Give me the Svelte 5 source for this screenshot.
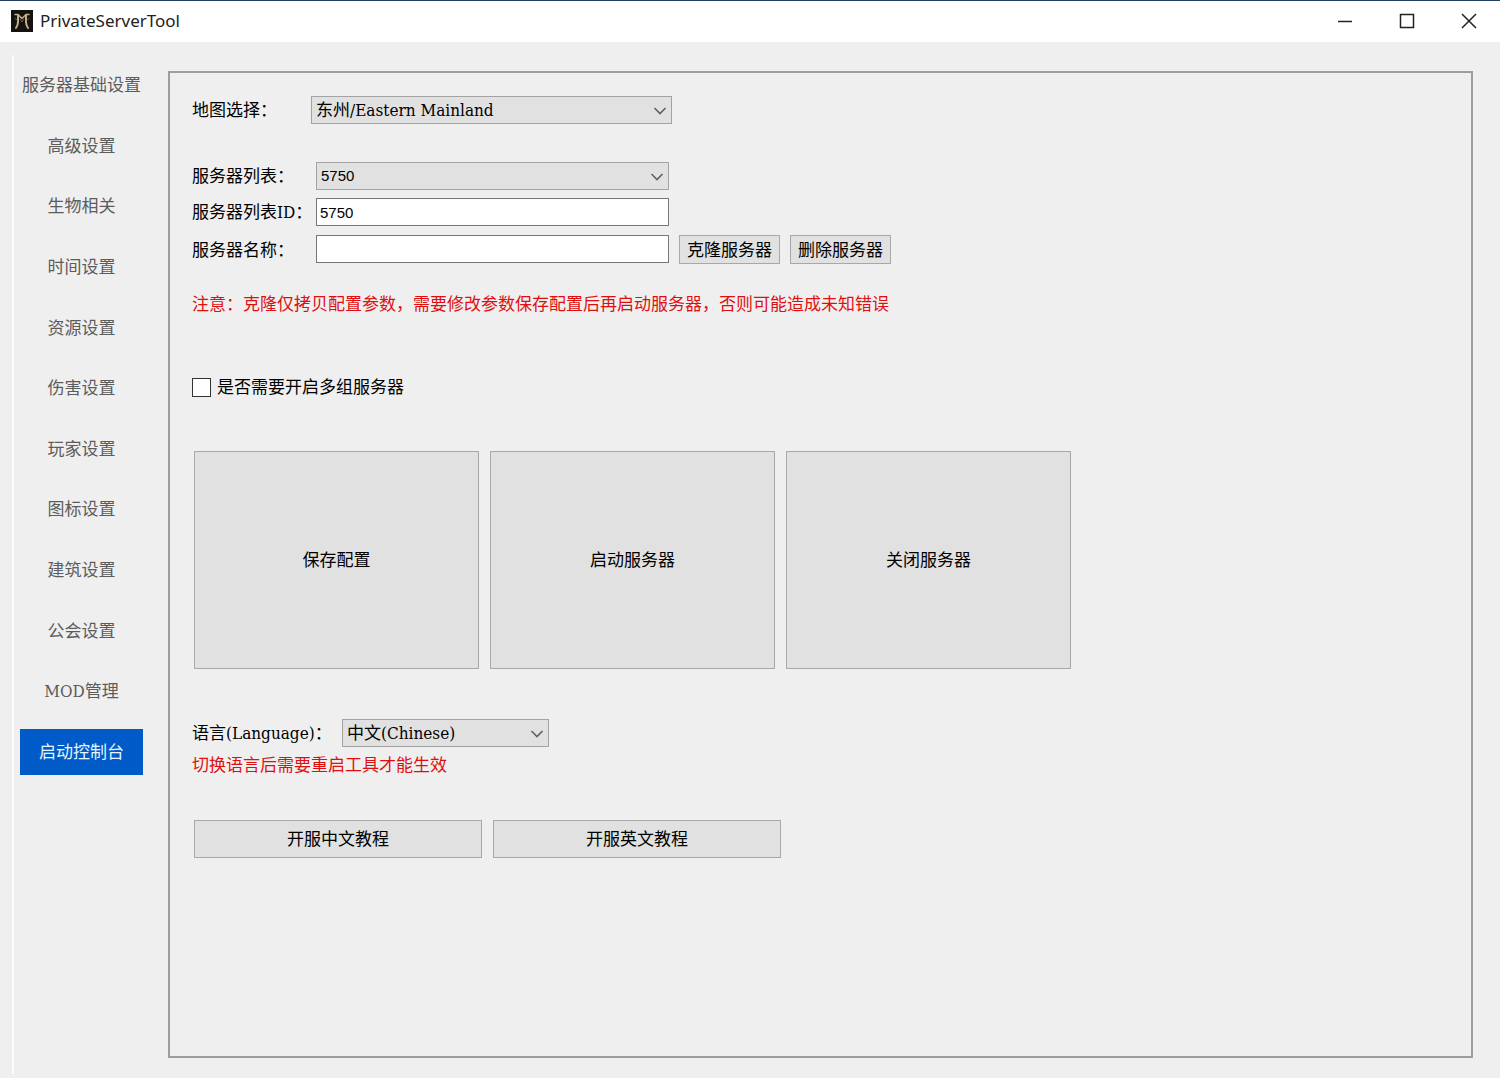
<script lang="ts">
  const tabs = [
    "服务器基础设置",
    "高级设置",
    "生物相关",
    "时间设置",
    "资源设置",
    "伤害设置",
    "玩家设置",
    "图标设置",
    "建筑设置",
    "公会设置",
    "MOD管理",
    "启动控制台",
  ];

  let activeTab = $state("启动控制台");
  let map = $state("东州/Eastern Mainland");
  let server = $state("5750");
  let serverId = $state("5750");
  let serverName = $state("");
  let multiServer = $state(false);
  let language = $state("中文(Chinese)");
</script>

{#snippet chevron()}
  <svg class="chevron" viewBox="0 0 14 8" aria-hidden="true">
    <path d="M1.5 1L7 6.5L12.5 1" fill="none" stroke="#606060" stroke-width="1.6" />
  </svg>
{/snippet}

<div class="window">
  <header class="titlebar">
    <svg class="logo" viewBox="0 0 22 22" aria-hidden="true">
      <rect width="22" height="22" fill="#15130f" />
      <g fill="none" stroke="#c4b088" stroke-linecap="round" stroke-linejoin="round">
        <path d="M4 4.5H7L11 8.5L15 4.5H18" stroke-width="1.5" />
        <path d="M7 5V12Q7 15 5 18M15 5V12Q15 15 17 18" stroke-width="2" />
        <path d="M4 8.500L6 10M18 8.500L16 10M9 9L11 12L13 9" stroke="#6c5c3c" stroke-width="1" />
      </g>
    </svg>
    <span class="title">PrivateServerTool</span>
    <div class="window-buttons">
      <button aria-label="Minimize">
        <svg viewBox="0 0 16 16"><path d="M1 8.5H15" /></svg>
      </button>
      <button aria-label="Maximize">
        <svg viewBox="0 0 16 16"><path d="M1.5 1.5H14.5V14.5H1.5Z" /></svg>
      </button>
      <button aria-label="Close">
        <svg viewBox="0 0 16 16"><path d="M1 1L15 15M15 1L1 15" /></svg>
      </button>
    </div>
  </header>

  <div class="body">
    <nav class="tabs">
      {#each tabs as tab}
        <button class:active={tab === activeTab} onclick={() => (activeTab = tab)}>{tab}</button>
      {/each}
    </nav>

    <main class="panel">
      <div class="row map-row">
        <label for="map">地图选择：</label>
        <div class="select">
          <select id="map" bind:value={map}>
            <option>东州/Eastern Mainland</option>
          </select>
          {@render chevron()}
        </div>
      </div>

      <div class="server-form">
        <div class="row">
          <label for="server">服务器列表：</label>
          <div class="select">
            <select id="server" class="number" bind:value={server}>
              <option>5750</option>
            </select>
            {@render chevron()}
          </div>
        </div>
        <div class="row">
          <label for="server-id">服务器列表ID：</label>
          <input id="server-id" class="number" type="text" bind:value={serverId} />
        </div>
        <div class="row name-row">
          <label for="server-name">服务器名称：</label>
          <input id="server-name" type="text" bind:value={serverName} />
          <button class="small">克隆服务器</button>
          <button class="small">删除服务器</button>
        </div>
      </div>

      <p class="warning">注意：克隆仅拷贝配置参数，需要修改参数保存配置后再启动服务器，否则可能造成未知错误</p>

      <label class="check">
        <input type="checkbox" bind:checked={multiServer} />
        是否需要开启多组服务器
      </label>

      <div class="actions">
        <button>保存配置</button>
        <button>启动服务器</button>
        <button>关闭服务器</button>
      </div>

      <div class="row language-row">
        <label for="language">语言(Language)：</label>
        <div class="select">
          <select id="language" bind:value={language}>
            <option>中文(Chinese)</option>
          </select>
          {@render chevron()}
        </div>
      </div>
      <p class="warning">切换语言后需要重启工具才能生效</p>

      <div class="guides">
        <button>开服中文教程</button>
        <button>开服英文教程</button>
      </div>
    </main>
  </div>
</div>

<style>
  :global(body) {
    margin: 0;
  }

  .window {
    display: flex;
    flex-direction: column;
    box-sizing: border-box;
    min-height: 100vh;
    border-top: 1px solid #23415f;
    background: #efefef;
    color: #000;
    font-family: "DejaVu Serif Condensed", "Noto Sans CJK SC", serif;
    font-size: 17px;
    line-height: 24px;
  }

  button,
  input,
  select {
    box-sizing: border-box;
    margin: 0;
    padding: 0;
    border-radius: 0;
    color: inherit;
    font: inherit;
  }

  .titlebar {
    display: flex;
    align-items: center;
    box-sizing: border-box;
    height: 41px;
    padding: 0 0 2px 11px;
    background: #fff;
  }

  .logo {
    width: 22px;
    height: 22px;
  }

  .title {
    margin-left: 7px;
    color: #222;
    font-family: "Noto Sans", sans-serif;
    font-size: 17px;
  }

  .window-buttons {
    display: flex;
    align-self: stretch;
    margin-left: auto;
  }

  .window-buttons button {
    display: flex;
    align-items: center;
    justify-content: center;
    width: 62px;
    border: none;
    background: none;
  }

  .window-buttons svg {
    width: 16px;
    height: 16px;
    fill: none;
    stroke: #222;
    stroke-width: 1.5;
  }

  .body {
    display: flex;
    flex: 1;
    padding: 13px 27px 4px 12px;
  }

  .tabs {
    display: flex;
    flex-direction: column;
    flex-shrink: 0;
    justify-content: space-between;
    box-sizing: border-box;
    width: 156px;
    padding: 7px 25px 299px 6px;
    border-left: 2px solid #fbfbfb;
  }

  .tabs button {
    height: 46px;
    border: none;
    background: none;
    color: #5c5c5c;
    white-space: nowrap;
  }

  .tabs button.active {
    background: #005ac8;
    color: #e4f6ff;
  }

  .panel {
    flex: 1;
    margin: 16px 0 16px;
    padding: 23px 22px;
    border: 2px solid #9b9da3;
  }

  .row {
    display: flex;
    align-items: center;
  }

  .row label {
    flex-shrink: 0;
    width: 124px;
    white-space: nowrap;
  }

  .select {
    position: relative;
    width: 353px;
  }

  select {
    display: block;
    width: 100%;
    height: 28px;
    padding: 0 24px 0 4px;
    border: 1px solid #a3a3a3;
    background: #e1e1e1;
    appearance: none;
  }

  .chevron {
    position: absolute;
    top: 11px;
    right: 5px;
    width: 14px;
    height: 8px;
    pointer-events: none;
  }

  .row input {
    width: 353px;
    height: 28px;
    padding: 0 3px;
    border: 1px solid #777;
    background: #fff;
  }

  .row .number {
    font-family: "Liberation Sans", sans-serif;
    font-size: 15px;
  }

  .map-row label {
    width: 119px;
  }

  .map-row .select {
    width: 361px;
  }

  .server-form {
    display: flex;
    flex-direction: column;
    gap: 8px;
    margin-top: 38px;
  }

  .name-row {
    align-items: flex-start;
    margin-top: 1px;
  }

  .name-row label {
    padding-top: 3px;
  }

  .actions button,
  .guides button,
  .small {
    border: 1px solid #a8a8a8;
    background: #e1e1e1;
    white-space: nowrap;
  }

  .small {
    width: 101px;
    height: 29px;
    margin-left: 10px;
  }

  .warning {
    margin: 0;
    color: #e00f0f;
  }

  .server-form + .warning {
    margin-top: 28px;
  }

  .check {
    display: flex;
    align-items: center;
    gap: 6px;
    width: max-content;
    margin-top: 59px;
  }

  .check input {
    width: 19px;
    height: 19px;
    border: 1px solid #333;
    background: #fff;
    appearance: none;
  }

  .check input:checked {
    background: #333;
    box-shadow: inset 0 0 0 3px #fff;
  }

  .actions,
  .guides {
    display: flex;
    gap: 11px;
    padding-left: 2px;
  }

  .actions {
    margin-top: 52px;
  }

  .actions button {
    width: 285px;
    height: 218px;
  }

  .language-row {
    margin-top: 50px;
  }

  .language-row label {
    width: 150px;
  }

  .language-row .select {
    width: 207px;
  }

  .language-row + .warning {
    margin-top: 6px;
  }

  .guides {
    margin-top: 43px;
  }

  .guides button {
    width: 288px;
    height: 38px;
  }
</style>
